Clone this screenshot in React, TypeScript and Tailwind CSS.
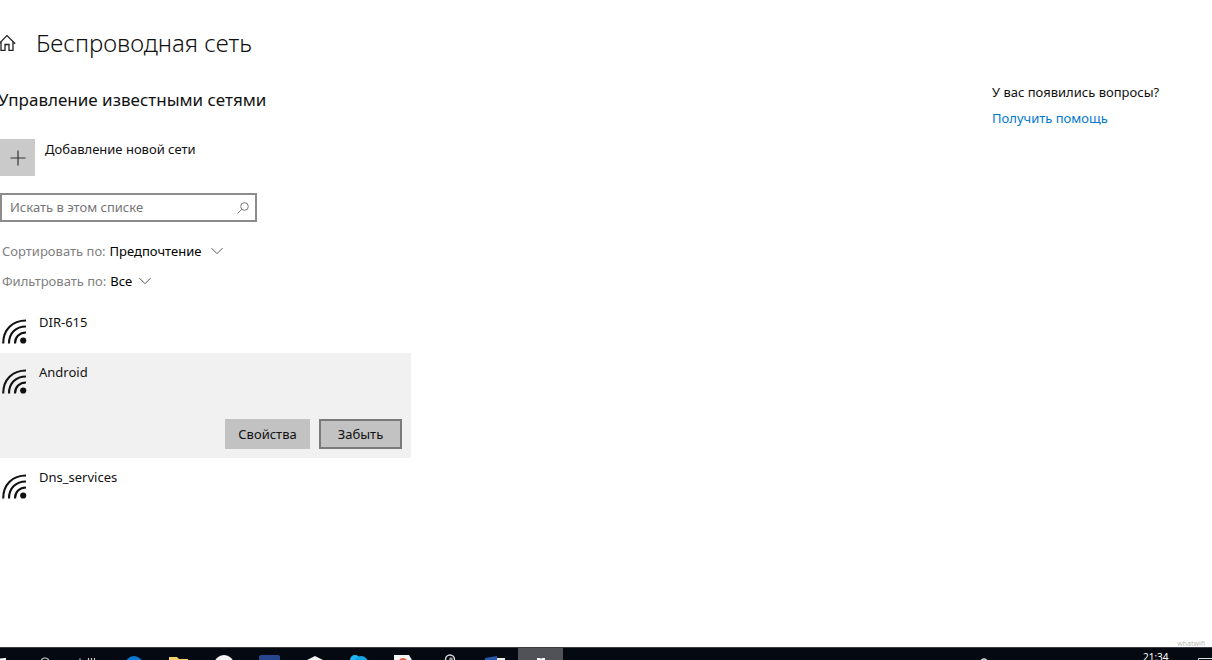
import React from "react";

function HomeIcon() {
  return (
    <svg className="h-[18px] w-[18px]" viewBox="0 0 18 18" fill="none" stroke="#222" strokeWidth="1.3" aria-hidden="true">
      <path d="M.8 9.8 9 1.6l8.2 8.2M3 8V16.4h4V10.5h4v5.9h4V8" />
    </svg>
  );
}

function PlusIcon() {
  return (
    <svg className="h-4 w-4" viewBox="0 0 16 16" fill="none" stroke="#333" strokeWidth="1.2" aria-hidden="true">
      <path d="M8 .5v15M.5 8h15" />
    </svg>
  );
}

function SearchIcon() {
  return (
    <svg className="h-3 w-3 shrink-0" viewBox="0 0 12 12" fill="none" stroke="#777" strokeWidth="1" aria-hidden="true">
      <circle cx="7.5" cy="4.5" r="3.8" />
      <path d="M4.8 7.2.5 11.5" />
    </svg>
  );
}

function Chevron() {
  return (
    <svg className="h-2 w-3 shrink-0" viewBox="0 0 12 8" fill="none" stroke="#555" strokeWidth="1" aria-hidden="true">
      <path d="M.5 1.2 6 6.7l5.5-5.5" />
    </svg>
  );
}

function WifiIcon() {
  return (
    <svg className="h-[25px] w-[25px] shrink-0" viewBox="0 0 25 25" fill="none" stroke="#111" strokeWidth="2.1" aria-hidden="true">
      <path d="M1.2 24.5C1.2 10.5 10.5 1.5 24 1.5M7 24.5C7 14 14 7.5 24 7.5M13 24.5C13 18 17.5 13.5 24 13.5" />
      <circle cx="21.2" cy="21.5" r="3.1" fill="#111" stroke="none" />
    </svg>
  );
}

function Picker({ id, label, options, width }: { id: string; label: string; options: string[]; width: string }) {
  return (
    <div className="flex h-[30px] items-center text-[#808080]">
      <label htmlFor={id} className="whitespace-nowrap">{label}</label>
      <select id={id} className={"ml-1 appearance-none bg-transparent text-black outline-none " + width}>
        {options.map((o) => <option key={o}>{o}</option>)}
      </select>
      <Chevron />
    </div>
  );
}

function Network({ name, selected = false }: { name: string; selected?: boolean }) {
  return (
    <li className={selected ? "bg-[#f1f1f1] pb-[9px]" : ""}>
      <div className="flex h-[50px] gap-3 pl-[2px]">
        <div className="pt-4"><WifiIcon /></div>
        <span className="pt-[10px]">{name}</span>
      </div>
      {selected && (
        <div className="mt-4 flex justify-end gap-[9px] pr-[9px]">
          <button type="button" className="h-[30px] w-[85px] bg-[#c2c2c2]">Свойства</button>
          <button type="button" className="h-[30px] w-[83px] border-2 border-[#7a7a7a] bg-[#c2c2c2]">Забыть</button>
        </div>
      )}
    </li>
  );
}

function Taskbar() {
  return (
    <footer className="flex h-[13px] shrink-0 items-start overflow-hidden border-t border-[#3a3d42] bg-[#050a12] text-white">
      <svg className="h-3 w-[518px] shrink-0" viewBox="0 0 518 12" aria-hidden="true">
        <path d="M0 10.5 6 10v2H0z" fill="#fff" />
        <circle cx="45" cy="14" r="4" fill="none" stroke="#ddd" strokeWidth="1.2" />
        <path d="M80 10.5V12M88.5 10V12M91.5 10V12M94.5 10V12" stroke="#ccc" strokeWidth="1.2" />
        <circle cx="134" cy="17" r="9" fill="#0a78d4" />
        <path d="M169 9h8l2 2h9v5h-19z" fill="#f4d16a" />
        <circle cx="224" cy="17" r="10" fill="#f4f4f4" />
        <rect x="259" y="7" width="21" height="12" rx="2" fill="#26478d" />
        <path d="m307 12 8-4 8 4z" fill="#f4f4f4" />
        <circle cx="355" cy="12" r="5" fill="#20b7ee" />
        <circle cx="361" cy="15" r="7" fill="#13a7e5" />
        <path d="M394 7h15l3 5h-18z" fill="#f4f4f4" />
        <path d="M399 12q4-4 8 0z" fill="#e9573f" />
        <circle cx="450" cy="11.5" r="4.5" fill="none" stroke="#ddd" strokeWidth="1.4" />
        <circle cx="451" cy="11" r="1.8" fill="#999" />
        <path d="m485 10 12-2v6h-12z" fill="#2459ab" />
        <path d="M497 10h8v4h-8z" fill="#eee" />
      </svg>
      <span className="flex h-3 w-[45px] shrink-0 justify-center bg-[#505258]">
        <svg className="h-3 w-3" viewBox="0 0 12 12" aria-hidden="true"><path d="M2 10h3l1 1 1-1h3v2H2z" fill="#fff" /></svg>
      </span>
      <div className="ml-auto flex items-start">
        <svg className="h-3 w-8" viewBox="0 0 32 12" aria-hidden="true"><circle cx="11" cy="14" r="3" fill="none" stroke="#ddd" strokeWidth="1.3" /></svg>
        <time className="ml-[138px] w-[54px] pt-[3px] text-[10px] leading-[12px]">21:34</time>
        <svg className="h-3 w-[15px]" viewBox="0 0 15 12" aria-hidden="true"><path d="M1.5 12v-1.5H15" fill="none" stroke="#ddd" /></svg>
      </div>
    </footer>
  );
}

export default function App() {
  return (
    <div className="flex h-screen flex-col overflow-hidden bg-white font-['Noto_Sans','Open_Sans',sans-serif] text-[13px] leading-[18px] text-[#111]">
      <div className="flex grow items-start justify-between">
        <main className="w-[411px]">
          <header className="flex h-[85px] items-center gap-[20px]">
            <span className="-ml-[2px]"><HomeIcon /></span>
            <h1 className="whitespace-nowrap text-[24px] leading-[32px] font-light">Беспроводная сеть</h1>
          </header>
          <h2 className="-ml-[2px] pt-[3px] text-[17px] leading-[24px]">Управление известными сетями</h2>
          <button type="button" className="mt-[27px] flex items-start gap-[10px]">
            <span className="flex h-[37px] w-[35px] items-center justify-center bg-[#cacaca]"><PlusIcon /></span>
            <span className="pt-px">Добавление новой сети</span>
          </button>
          <label className="mt-[17px] flex h-[29px] w-[257px] items-center border-2 border-[#8c8c8c] pr-[6px] pl-2">
            <input type="text" aria-label="Искать в этом списке" placeholder="Искать в этом списке" className="min-w-0 grow bg-transparent pb-px outline-none placeholder:text-[#757575]" />
            <SearchIcon />
          </label>
          <div className="mt-[14px] pl-[2px]">
            <Picker id="sort" label="Сортировать по:" options={["Предпочтение", "Имя"]} width="w-[101px]" />
            <Picker id="filter" label="Фильтровать по:" options={["Все"]} width="w-[29px]" />
          </div>
          <ul className="mt-[7px]">
            <Network name="DIR-615" />
            <Network name="Android" selected />
            <Network name="Dns_services" />
          </ul>
        </main>
        <aside className="w-[220px] pt-[83px]">
          <h3>У вас появились вопросы?</h3>
          <a href="#help" className="mt-2 block text-[#0078d0]">Получить помощь</a>
        </aside>
      </div>
      <div className="flex h-[7px] shrink-0 justify-end pr-[7px] text-[7px] leading-[7px] text-[#bbb]">whatwifi</div>
      <Taskbar />
    </div>
  );
}
